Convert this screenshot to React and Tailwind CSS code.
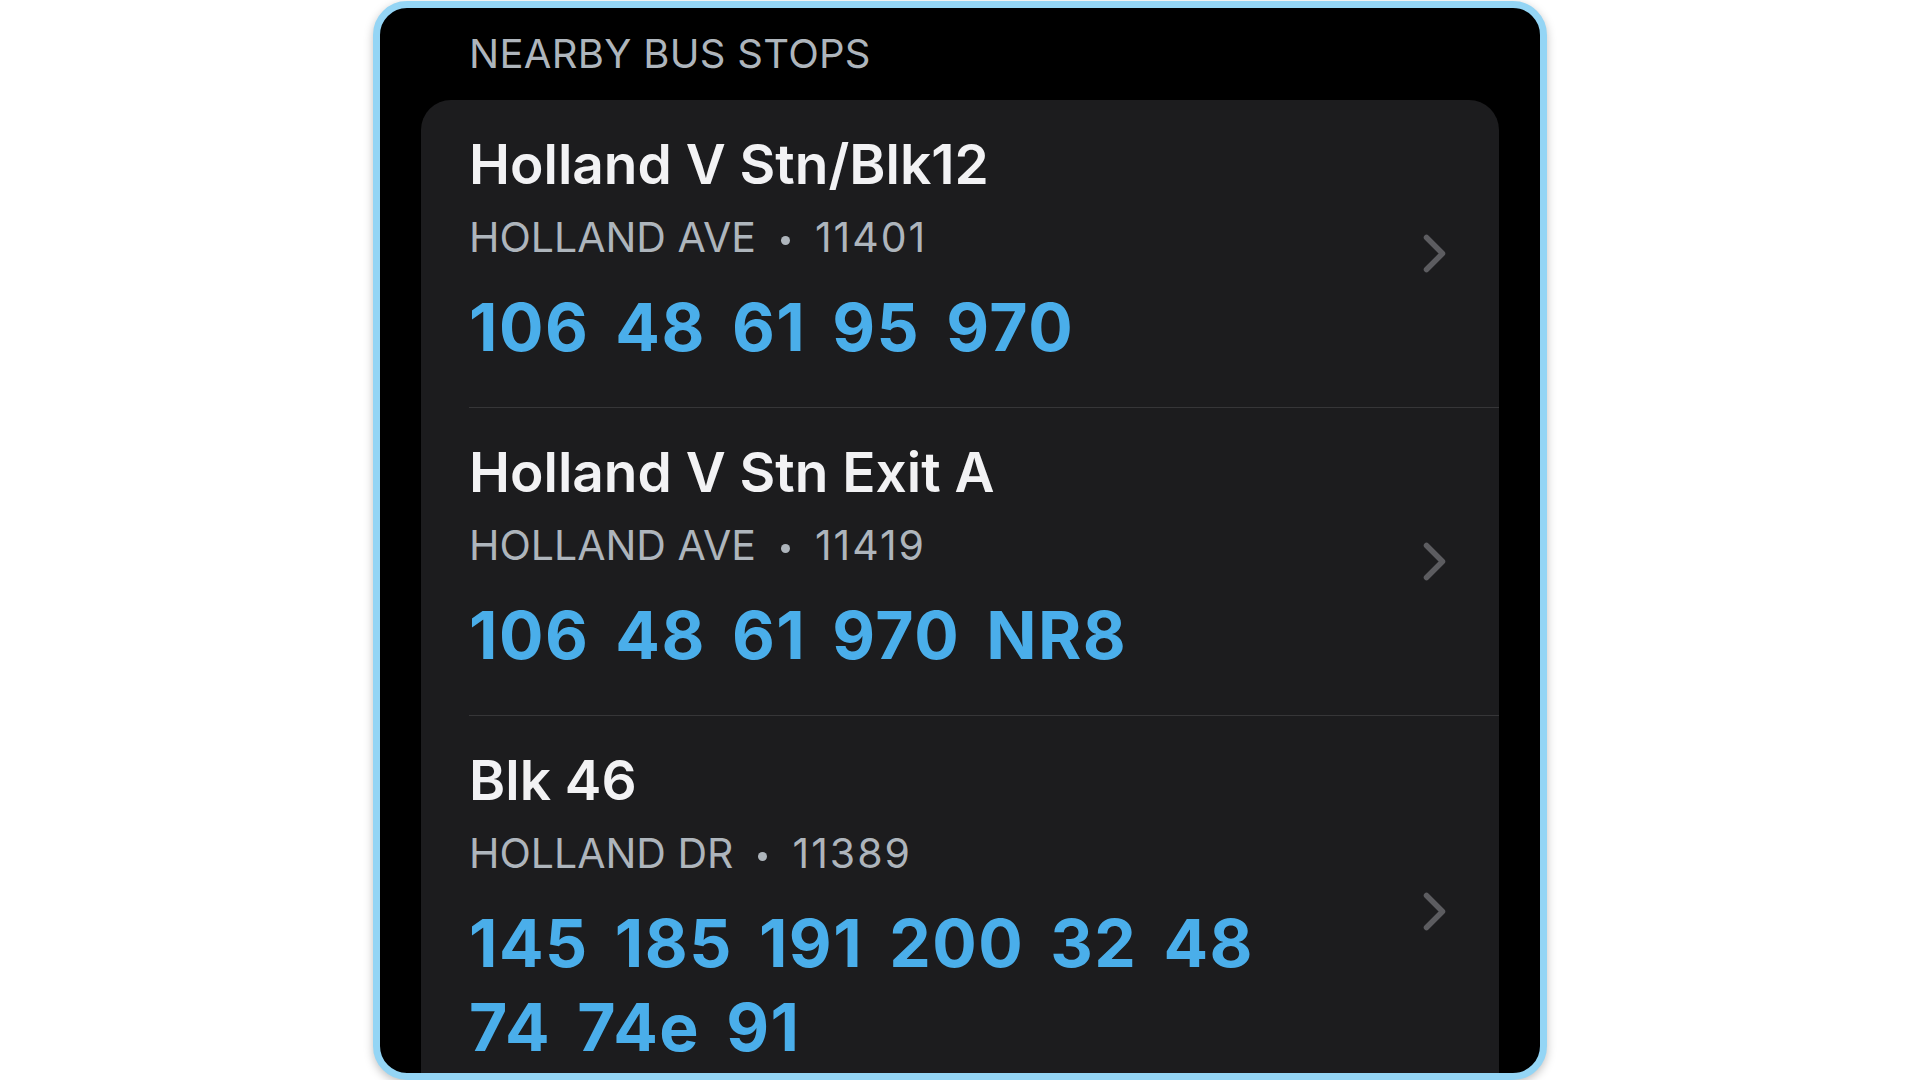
import React from "react";

const stops = [
  { name: "Holland V Stn/Blk12", road: "HOLLAND AVE", code: "11401", routes: ["106", "48", "61", "95", "970"] },
  { name: "Holland V Stn Exit A", road: "HOLLAND AVE", code: "11419", routes: ["106", "48", "61", "970", "NR8"] },
  { name: "Blk 46", road: "HOLLAND DR", code: "11389", routes: ["145", "185", "191", "200", "32", "48", "74", "74e", "91"] },
];

function Chevron() {
  return (
    <svg width="23" height="39" viewBox="0 0 23 39" className="shrink-0">
      <path d="M3.5 3.5 L19.5 19.5 L3.5 35.5" fill="none" stroke="#5c5c60" strokeWidth="5.5" strokeLinecap="round" strokeLinejoin="round" />
    </svg>
  );
}

function Row({ stop, last }) {
  return (
    <div className="pl-[48px]">
      <div className={"flex items-center pr-[53px] " + (last ? "" : "border-b border-[#363638]")}>
        <div className="flex-1 pt-[31px] pb-[38px] mr-[91px]">
          <div className="text-[55px] leading-[66px] font-semibold text-[#f2f2f4]">{stop.name}</div>
          <div className="mt-[16px] flex items-center gap-[25px] text-[41px] leading-[48px] text-[#aeb5bc]">
            <span>{stop.road}</span>
            <span className="w-[9px] h-[9px] rounded-full bg-[#aeb5bc] translate-y-[3px]"></span>
            <span className="tracking-[2px]">{stop.code}</span>
          </div>
          <div className="mt-[24px] flex flex-wrap gap-x-[26px] text-[66px] leading-[84px] font-bold tracking-[1.5px] text-[#4aaeea]">
            {stop.routes.map((r, i) => (
              <span key={i}>{r}</span>
            ))}
          </div>
        </div>
        <Chevron />
      </div>
    </div>
  );
}

export default function App() {
  return (
    <div className="w-[1920px] h-[1080px] bg-white flex justify-center overflow-hidden font-['Inter','Noto_Sans',sans-serif]">
      <div className="mt-[1px] w-[1174px] h-[1079px] shrink-0 border-[7px] border-[#94d5f5] rounded-[34px] bg-black overflow-hidden shadow-[0_3px_10px_rgba(0,0,0,0.25)]">
        <div className="px-[41px] pt-[22px]">
          <div className="ml-[48px] text-[40px] leading-[48px] tracking-[0.3px] text-[#aeb5bc]">NEARBY BUS STOPS</div>
          <div className="mt-[22px] bg-[#1c1c1e] rounded-t-[30px]">
            {stops.map((s, i) => (
              <Row key={i} stop={s} last={i === stops.length - 1} />
            ))}
          </div>
        </div>
      </div>
    </div>
  );
}
